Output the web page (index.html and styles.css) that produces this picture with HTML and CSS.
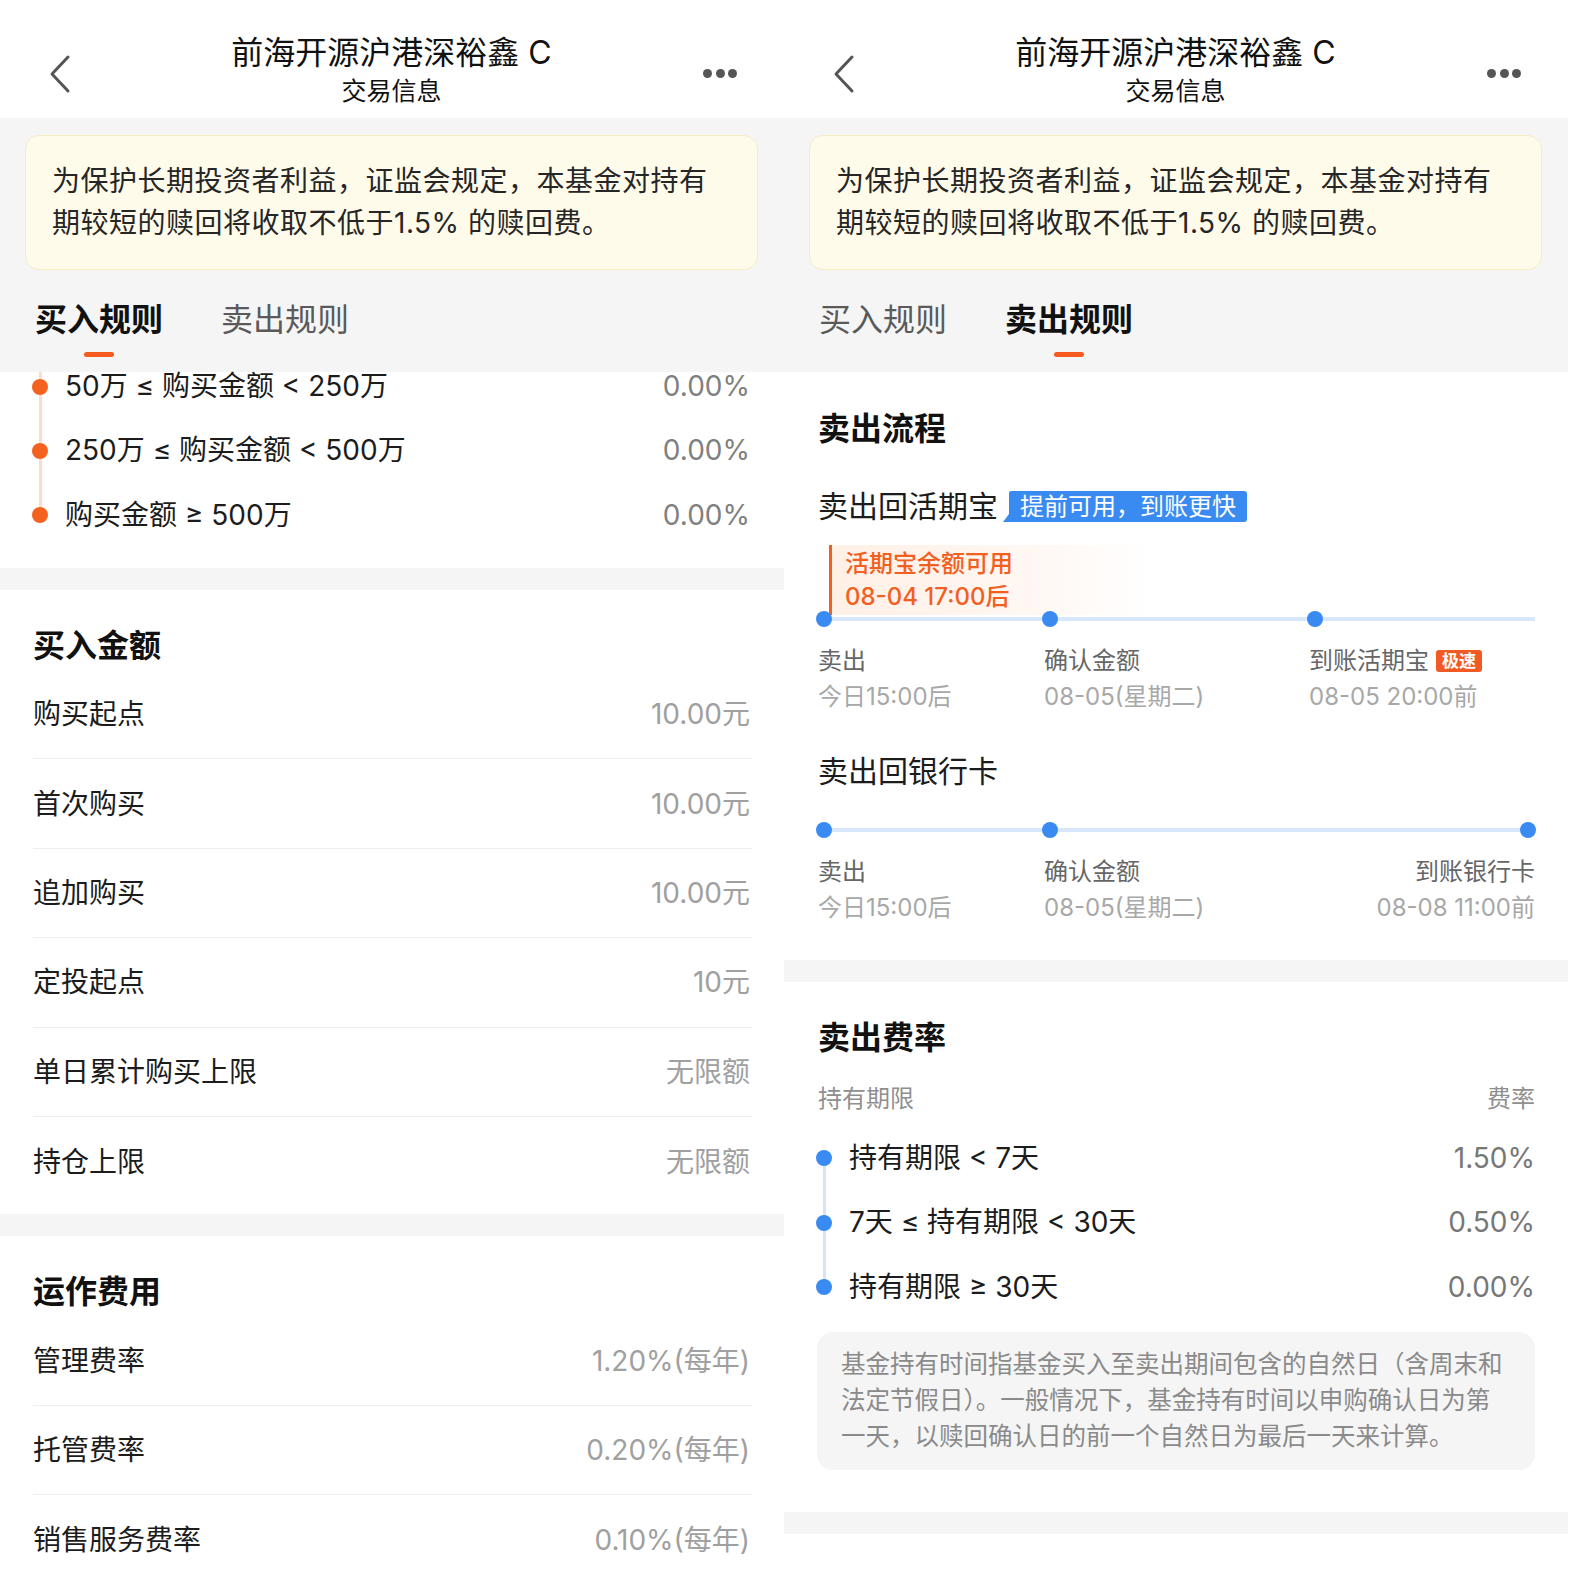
FILE: index.html
```html
<!DOCTYPE html>
<html lang="zh-CN">
<head>
<meta charset="utf-8">
<title>交易信息</title>
<link rel="stylesheet" href="styles.css">
</head>
<body>
<div class="screen">
  <header class="nav">
    <svg class="nav-back" viewBox="0 0 24 40" width="24" height="40"><polyline points="20,3 4,20 20,37"/></svg>
    <div class="nav-titles">
      <div class="nav-title">前海开源沪港深裕鑫 C</div>
      <div class="nav-sub">交易信息</div>
    </div>
    <div class="nav-more"><i></i><i></i><i></i></div>
  </header>
  <div class="top">
    <div class="notice">为保护长期投资者利益，证监会规定，本基金对持有期较短的赎回将收取不低于1.5% 的赎回费。</div>
    <div class="tabs">
      <div class="tab active"><span>买入规则</span><i></i></div>
      <div class="tab"><span>卖出规则</span><i></i></div>
    </div>
  </div>

  <div class="tiers tiers-cut">
    <ul class="tier-list orange from-top">
      <li><span class="dot"></span><span class="tier-name">50万 ≤ 购买金额 &lt; 250万</span><span class="tier-val">0.00%</span></li>
      <li><span class="dot"></span><span class="tier-name">250万 ≤ 购买金额 &lt; 500万</span><span class="tier-val">0.00%</span></li>
      <li><span class="dot"></span><span class="tier-name">购买金额 ≥ 500万</span><span class="tier-val">0.00%</span></li>
    </ul>
  </div>
  <div class="band"></div>

  <section class="kv">
    <h2 class="sec-title">买入金额</h2>
    <div class="kv-row"><span>购买起点</span><span class="kv-val">10.00元</span></div>
    <div class="kv-row"><span>首次购买</span><span class="kv-val">10.00元</span></div>
    <div class="kv-row"><span>追加购买</span><span class="kv-val">10.00元</span></div>
    <div class="kv-row"><span>定投起点</span><span class="kv-val">10元</span></div>
    <div class="kv-row"><span>单日累计购买上限</span><span class="kv-val">无限额</span></div>
    <div class="kv-row"><span>持仓上限</span><span class="kv-val">无限额</span></div>
  </section>
  <div class="band"></div>

  <section class="kv">
    <h2 class="sec-title">运作费用</h2>
    <div class="kv-row"><span>管理费率</span><span class="kv-val">1.20%(每年)</span></div>
    <div class="kv-row"><span>托管费率</span><span class="kv-val">0.20%(每年)</span></div>
    <div class="kv-row"><span>销售服务费率</span><span class="kv-val">0.10%(每年)</span></div>
  </section>
  <div class="band"></div>
</div>

<div class="screen">
  <header class="nav">
    <svg class="nav-back" viewBox="0 0 24 40" width="24" height="40"><polyline points="20,3 4,20 20,37"/></svg>
    <div class="nav-titles">
      <div class="nav-title">前海开源沪港深裕鑫 C</div>
      <div class="nav-sub">交易信息</div>
    </div>
    <div class="nav-more"><i></i><i></i><i></i></div>
  </header>
  <div class="top">
    <div class="notice">为保护长期投资者利益，证监会规定，本基金对持有期较短的赎回将收取不低于1.5% 的赎回费。</div>
    <div class="tabs">
      <div class="tab"><span>买入规则</span><i></i></div>
      <div class="tab active"><span>卖出规则</span><i></i></div>
    </div>
  </div>

  <section class="flow">
    <h2 class="sec-title">卖出流程</h2>
    <div class="flow-sub">卖出回活期宝<span class="bubble">提前可用，到账更快</span></div>
    <div class="callout">
      <div>活期宝余额可用</div>
      <div>08-04 17:00后</div>
    </div>
    <div class="timeline tl-a">
      <div class="step"><span class="tdot"></span><div class="step-name">卖出</div><div class="step-time">今日15:00后</div></div>
      <div class="step"><span class="tdot"></span><div class="step-name">确认金额</div><div class="step-time">08-05(星期二)</div></div>
      <div class="step"><span class="tdot"></span><div class="step-name">到账活期宝<span class="fast">极速</span></div><div class="step-time">08-05 20:00前</div></div>
    </div>

    <div class="flow-sub second">卖出回银行卡</div>
    <div class="timeline tl-b">
      <div class="step"><span class="tdot"></span><div class="step-name">卖出</div><div class="step-time">今日15:00后</div></div>
      <div class="step"><span class="tdot"></span><div class="step-name">确认金额</div><div class="step-time">08-05(星期二)</div></div>
      <div class="step end"><span class="tdot"></span><div class="step-name">到账银行卡</div><div class="step-time">08-08 11:00前</div></div>
    </div>
  </section>
  <div class="band"></div>

  <section class="fees">
    <h2 class="sec-title">卖出费率</h2>
    <div class="fee-head"><span>持有期限</span><span>费率</span></div>
    <ul class="tier-list blue">
      <li><span class="dot"></span><span class="tier-name">持有期限 &lt; 7天</span><span class="tier-val">1.50%</span></li>
      <li><span class="dot"></span><span class="tier-name">7天 ≤ 持有期限 &lt; 30天</span><span class="tier-val">0.50%</span></li>
      <li><span class="dot"></span><span class="tier-name">持有期限 ≥ 30天</span><span class="tier-val">0.00%</span></li>
    </ul>
    <p class="note">基金持有时间指基金买入至卖出期间包含的自然日（含周末和法定节假日）。一般情况下，基金持有时间以申购确认日为第一天，以赎回确认日的前一个自然日为最后一天来计算。</p>
  </section>
  <div class="band"></div>
</div>
</body>
</html>
```

FILE: styles.css
```css
* { box-sizing: border-box; }

html, body {
  margin: 0;
  padding: 0;
  width: 1586px;
  height: 1586px;
  overflow: hidden;
  background: #ffffff;
}

body {
  display: flex;
  align-items: flex-start;
  font-family: Inter, "Noto Sans CJK SC", sans-serif;
  color: #1c1c1c;
}

.screen {
  width: 784px;
  height: 1586px;
  overflow: hidden;
  flex-shrink: 0;
  background: #ffffff;
}

/* ---------- nav ---------- */
.nav {
  height: 118px;
  display: grid;
  grid-template-columns: 1fr auto 1fr;
  align-items: start;
  padding: 34px 47px 0 46px;
  background: #ffffff;
}

.nav-back {
  justify-self: start;
  margin-top: 20px;
  margin-left: 2px;
}
.nav-back polyline {
  fill: none;
  stroke: #555555;
  stroke-width: 3;
  stroke-linecap: round;
  stroke-linejoin: round;
}

.nav-titles { text-align: center; }
.nav-title {
  font-size: 32px;
  line-height: 38px;
  color: #111111;
}
.nav-sub {
  font-size: 25px;
  line-height: 30px;
  color: #111111;
  margin-top: 4px;
}

.nav-more {
  justify-self: end;
  display: flex;
  gap: 3.5px;
  margin-top: 35px;
}
.nav-more i {
  width: 9px;
  height: 9px;
  border-radius: 50%;
  background: #555555;
}

/* ---------- top grey area ---------- */
.top {
  background: #f5f5f5;
  padding-top: 17px;
}

.notice {
  margin: 0 26px 0 25px;
  padding: 24px 40px 25px 26px;
  background: #fffbea;
  border: 1.5px solid #f8ecc2;
  border-radius: 14px;
  font-size: 28px;
  letter-spacing: 0.5px;
  line-height: 42px;
  color: #262626;
}

.tabs {
  display: flex;
  gap: 58px;
  padding: 28px 34px 0 35px;
  height: 102px;
}
.tab {
  display: flex;
  flex-direction: column;
  align-items: center;
}
.tab span {
  font-size: 32px;
  line-height: 44px;
  color: #5a5a5a;
}
.tab i {
  width: 30px;
  height: 5px;
  border-radius: 3px;
  margin-top: 10px;
  background: transparent;
}
.tab.active span {
  font-weight: 700;
  color: #111111;
}
.tab.active i { background: #f55a1e; }

/* ---------- tier list with dots ---------- */
.tiers {
  padding: 0 34px 20.5px 34px;
}
.tiers-cut .tier-list li:first-child {
  height: 46.5px;
  padding-bottom: 17.5px;
}

.tier-list {
  list-style: none;
  margin: 0;
  padding: 0;
  position: relative;
}
.tier-list::before {
  content: "";
  position: absolute;
  left: 4.5px;
  width: 3px;
  top: 32px;
  bottom: 32px;
}
.tier-list.from-top::before { top: 0; }
.tier-list.orange::before { background: #fcdccb; }
.tier-list.blue::before { background: #d3e4fb; }

.tier-list li {
  height: 64.5px;
  display: flex;
  align-items: center;
  position: relative;
}
.dot {
  width: 16px;
  height: 16px;
  border-radius: 50%;
  margin-left: -2px;
  flex-shrink: 0;
}
.orange .dot { background: #f4621f; }
.blue .dot { background: #3a8bf1; }

.tier-name {
  margin-left: 17px;
  font-size: 28px;
  line-height: 29px;
  color: #1c1c1c;
  flex: 1;
}
.tier-val {
  font-size: 28px;
  line-height: 29px;
  color: #808080;
}

.band {
  height: 22px;
  background: #f5f5f5;
}

/* ---------- key/value sections ---------- */
.kv {
  padding: 34px 32px 8px 33px;
}
.sec-title {
  margin: 0;
  font-size: 32px;
  line-height: 44px;
  font-weight: 700;
  color: #111111;
}
.kv .sec-title { margin-bottom: 2px; }

.kv-row {
  height: 89.4px;
  display: flex;
  align-items: center;
  justify-content: space-between;
  border-bottom: 1.5px solid #efefef;
  font-size: 28px;
  line-height: 40px;
  color: #1c1c1c;
}
.kv-row:last-child { border-bottom: none; }
.kv-val {
  color: #a0a0a0;
  margin-right: 2px;
}

/* ---------- sell flow ---------- */
.flow {
  padding: 35px 33px 34px 34px;
}

.flow-sub {
  margin-top: 35px;
  display: flex;
  align-items: center;
  font-size: 30px;
  line-height: 40px;
  color: #1c1c1c;
}
.flow-sub.second { margin-top: 36px; }

.bubble {
  position: relative;
  margin-left: 11px;
  height: 31px;
  padding: 0 11px;
  background: #3a8bf1;
  color: #ffffff;
  font-size: 24px;
  line-height: 31px;
  border-radius: 2px 3px 3px 0;
}
.bubble::before {
  content: "";
  position: absolute;
  left: -6px;
  bottom: 0;
  border-right: 6px solid #3a8bf1;
  border-top: 8px solid transparent;
}

.callout {
  margin: 19px 0 0 11px;
  width: 325px;
  height: 70px;
  padding: 2px 0 0 13px;
  border-left: 3px solid #f2601f;
  background: linear-gradient(90deg, #fff0e6 0%, rgba(255, 242, 234, 0.6) 60%, rgba(255, 255, 255, 0) 100%);
  font-size: 24px;
  line-height: 33px;
  font-weight: 500;
  color: #f2601f;
}

.timeline {
  position: relative;
  display: grid;
}
.timeline::before {
  content: "";
  position: absolute;
  top: 6px;
  left: 6px;
  right: 0;
  height: 4px;
  background: #d8e7fc;
}
.tl-a {
  margin-top: -4px;
  grid-template-columns: 226px 265px 1fr;
}
.tl-b {
  margin-top: 31px;
  grid-template-columns: 226px 1fr auto;
}
.tl-b::before { right: 8px; }

.step {
  display: flex;
  flex-direction: column;
  align-items: flex-start;
}
.step.end { align-items: flex-end; }

.tdot {
  position: relative;
  width: 16px;
  height: 16px;
  border-radius: 50%;
  background: #3a8bf1;
  margin-left: -2px;
}
.step.end .tdot { margin-left: 0; margin-right: -1px; }

.step-name {
  margin-top: 16px;
  display: flex;
  align-items: center;
  font-size: 24px;
  line-height: 36px;
  color: #666666;
}
.step-time {
  font-size: 24px;
  line-height: 36px;
  color: #a8a8a8;
}
.step.end .step-name,
.step.end .step-time { text-align: right; }

.fast {
  margin-left: 7px;
  padding: 0 6px;
  height: 22px;
  line-height: 22px;
  font-size: 17px;
  font-weight: 700;
  color: #ffffff;
  background: #f15a22;
  border-radius: 3px;
}

/* ---------- sell fees ---------- */
.fees {
  padding: 34px 33px 42px 34px;
}
.fee-head {
  margin-top: 22px;
  display: flex;
  justify-content: space-between;
  font-size: 24px;
  line-height: 34px;
  color: #8f8f8f;
}
.fees .tier-list { margin-top: 10px; }
.fees .tier-val { color: #777777; }

.note {
  margin: 12.5px 0 0 -1px;
  padding: 14px 24px 16px 24px;
  background: #f5f5f5;
  border-radius: 16px;
  font-size: 24.5px;
  line-height: 36px;
  color: #8a8a8a;
}
```
